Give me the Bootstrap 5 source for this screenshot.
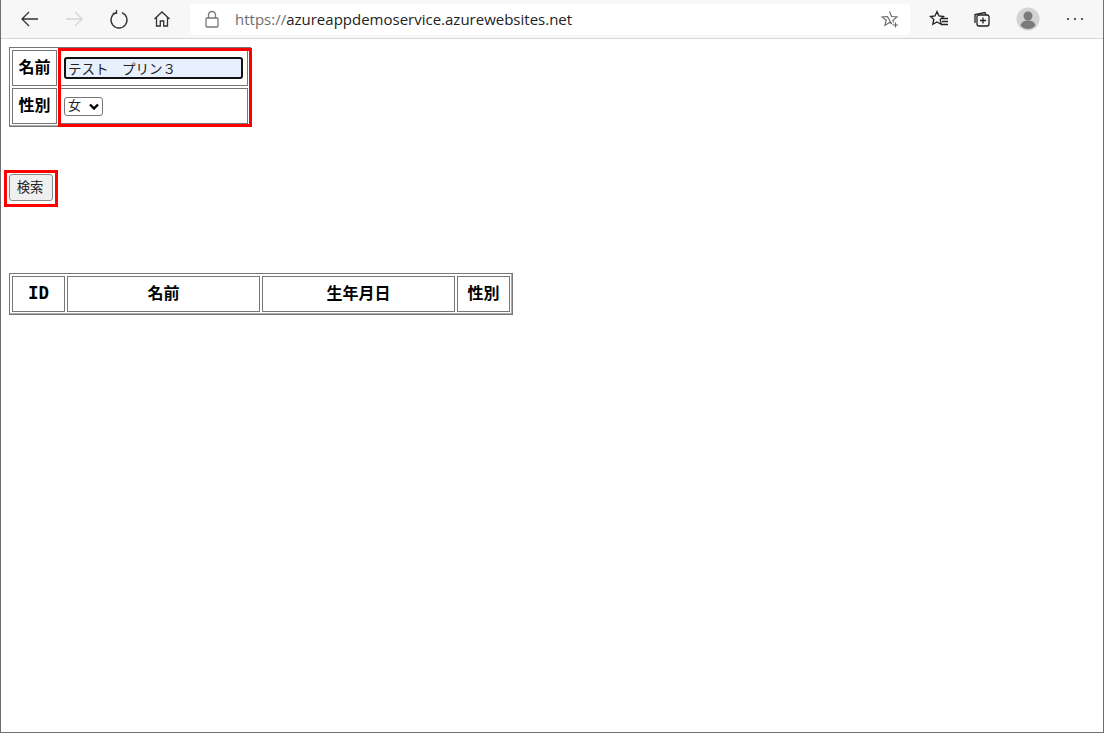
<!DOCTYPE html>
<html lang="ja">
<head>
<meta charset="utf-8">
<title>検索</title>
<link href="https://cdn.jsdelivr.net/npm/bootstrap@5.3.0/dist/css/bootstrap.min.css" rel="stylesheet">
<style>
html,body{height:100%;overflow:hidden;background:#fff}
body{font-family:"Liberation Sans","Noto Sans CJK JP",sans-serif;color:#000}
.win{height:733px;border:1px solid #6e6e6e;border-top:0;display:flex;flex-direction:column}
.chrome{height:39px;flex:none;background:#f7f7f7;border-bottom:1px solid #d6d6d6;position:relative}
.tb-ic{flex:none;display:block;fill:none;stroke:#333;stroke-width:1.3}
.addr{width:720px;height:31px;background:#fff;border-radius:4px;margin-left:19px;padding:0 11px 0 15px}
.url{font:15px "Open Sans","Liberation Sans",sans-serif;color:#222;margin-left:16px;white-space:nowrap}
.url span{color:#6d6d6d}
.pg{flex:1;padding:8px 8px 0 8px;position:relative}
.bt{border-collapse:separate;border-spacing:2px;border:1px solid #777;box-shadow:inset -1px -1px 0 #aaa}
.bt th,.bt td{border:1px solid #777;padding:0;font-family:"Noto Sans CJK JP",sans-serif;font-size:16px;line-height:1.2}
.bt th{font-weight:700;text-align:center;padding-bottom:2px}
.ft{width:242px;height:80px;table-layout:fixed}
.ft th{width:45px;height:36px}
.ft td{padding-left:4px}
.nm{display:block;width:179px;height:22px;padding:0 2px;border:2px solid #111;border-radius:3px;background:#e8f0fe;font:13.5px "Noto Sans CJK JP",sans-serif;color:#222;outline:0}
.sx{display:block;width:39px;height:19px;padding:0 0 3px 3px;border:1px solid #777;border-radius:3px;background:#fff;font:13px/14px "Noto Sans CJK JP",sans-serif;color:#222;appearance:none;-webkit-appearance:none}
.sel-wrap{position:relative;display:block;width:39px}
.chev{position:absolute;right:4px;top:6px;fill:none;stroke:#000;stroke-width:2.4;pointer-events:none}
.go{display:block;width:44px;height:27px;margin-top:47px;padding:0 2px 3px 0;border:1px solid #8a8a8a;border-radius:3px;background:#efefef;font:13.3px "Noto Sans CJK JP",sans-serif;color:#222}
.rt{width:504px;height:42px;margin-top:72px;table-layout:fixed}
.c1,.c4{width:53px}.c2,.c3{width:193px}
.mono{font-family:"DejaVu Sans Mono",monospace!important;font-size:17.5px!important}
.hl{position:absolute;border:3px solid #f00;pointer-events:none}
.h1{left:57px;top:9px;width:194px;height:79px}
.h2{left:3px;top:131px;width:54px;height:37px}
</style>
</head>
<body>
<div class="win">
  <div class="chrome d-flex align-items-center">
    <svg class="tb-ic" style="margin-left:19px" width="20" height="20" viewBox="0 0 20 20"><path d="M18 10H2M9 3l-7 7 7 7"/></svg>
    <svg class="tb-ic" style="margin-left:24px;stroke:#d4d4d4" width="20" height="20" viewBox="0 0 20 20"><path d="M2 10h16M11 3l7 7-7 7"/></svg>
    <svg class="tb-ic" style="margin-left:25px" width="20" height="20" viewBox="0 0 20 20"><path d="M7 3.600a8 8 0 1 0 6 0M7.500 1v3.400H3.800"/></svg>
    <svg class="tb-ic" style="margin-left:24px" width="18" height="18" viewBox="0 0 18 18"><path d="M1.500 9 9 2l7.500 7M3.500 7.500V16h3.800v-5h3.400v5h3.800V7.500"/></svg>
    <div class="addr d-flex align-items-center">
      <svg class="tb-ic" style="stroke:#777" width="14" height="18" viewBox="0 0 14 18"><rect x="1" y="8" width="12" height="9" rx="1"/><path d="M3.500 8V5a3.500 3.500 0 0 1 7 0v3"/></svg>
      <div class="url"><span>https://</span>azureappdemoservice.azurewebsites.net</div>
      <svg class="tb-ic ms-auto" style="stroke:#666;stroke-width:1.100" width="18" height="18" viewBox="0 0 18 18"><path d="M8.500 1.500 10.600 6.500l5.400.4-4.100 3.500.7 2.300M10.500 13.600l-2-1.100-4.600 2.900 1.300-5.200L1 6.900l5.400-.4zM14.500 12.500v5M12 15h5"/></svg>
    </div>
    <svg class="tb-ic" style="margin-left:19px;stroke:#222" width="20" height="18" viewBox="0 0 20 18"><path d="M8 1.500 10 6l4.500.5-3.300 3 1 4.800L8 12l-4.200 2.300 1-4.800-3.300-3L6 6zM12 8.500h7M13 11.500h6M12 14.500h7"/></svg>
    <svg class="tb-ic" style="margin-left:24px;stroke:#222" width="18" height="18" viewBox="0 0 18 18"><path d="M2 13V4.500L12 2.500l1 2.500"/><rect x="4" y="5" width="12" height="11" rx="2"/><path d="M10 7.500v6M7 10.500h6"/></svg>
    <svg style="margin-left:25px" width="24" height="24" viewBox="0 0 24 24"><circle cx="12" cy="12" r="11.500" fill="#d3d3d3"/><circle cx="12" cy="9" r="4.500" fill="#7a7a7a"/><path d="M4.500 18.500c1-4 4-5 7.500-5s6.500 1 7.500 5c-2 2.500-5 3.500-7.500 3.500s-5.500-1-7.500-3.500z" fill="#7a7a7a"/></svg>
    <svg style="margin-left:26px" width="18" height="4" viewBox="0 0 18 4"><circle cx="2" cy="2" r="1.100" fill="#333"/><circle cx="9" cy="2" r="1.100" fill="#333"/><circle cx="16" cy="2" r="1.100" fill="#333"/></svg>
  </div>
  <div class="pg">
    <table class="bt ft">
      <tr><th>名前</th><td><input class="nm" type="text" value="テスト　プリン３"></td></tr>
      <tr><th>性別</th><td><span class="sel-wrap"><select class="sx"><option>女</option></select><svg class="chev" width="10" height="7" viewBox="0 0 10 7"><path d="M1 1.500l4 4 4-4"/></svg></span></td></tr>
    </table>
    <button class="go" type="button">検索</button>
    <table class="bt rt">
      <tr><th class="c1 mono">ID</th><th class="c2">名前</th><th class="c3">生年月日</th><th class="c4">性別</th></tr>
    </table>
    <div class="hl h1"></div>
    <div class="hl h2"></div>
  </div>
</div>
<script src="https://cdn.jsdelivr.net/npm/bootstrap@5.3.0/dist/js/bootstrap.bundle.min.js"></script>
</body>
</html>
